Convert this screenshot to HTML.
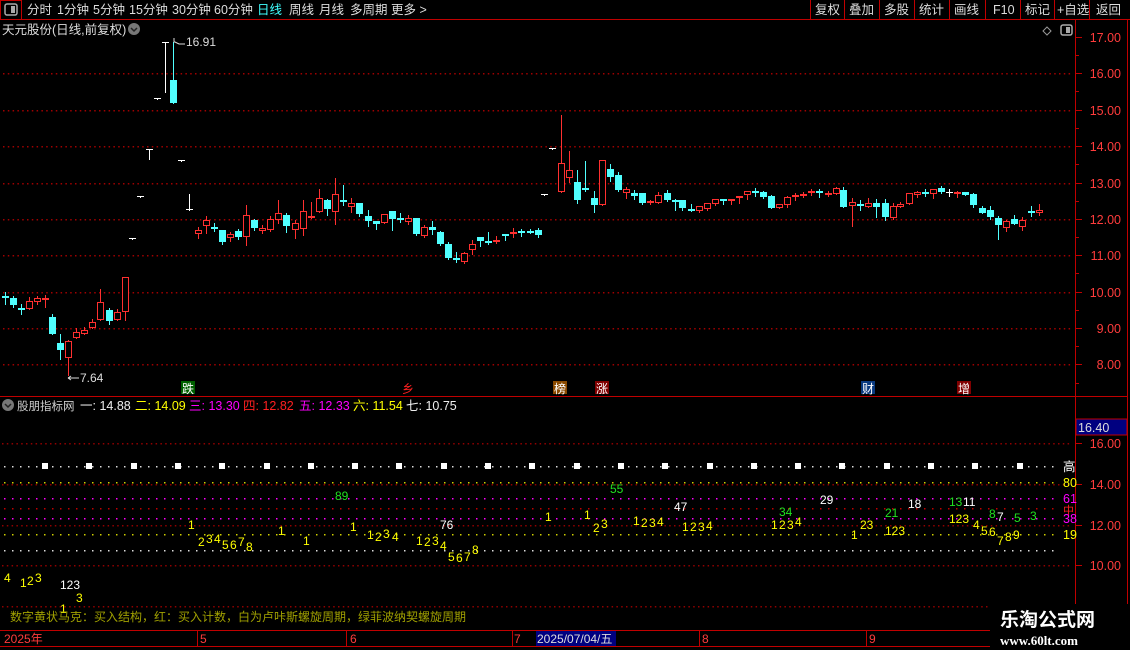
<!DOCTYPE html>
<html><head><meta charset="utf-8"><style>
*{margin:0;padding:0;box-sizing:border-box}
body{width:1130px;height:650px;background:#000;overflow:hidden;position:relative;font-family:"Liberation Sans","Noto Sans CJK SC",sans-serif;color:#ddd}
svg{position:absolute;left:0;top:0}
</style></head><body>
<svg id="s" width="1130" height="650" xmlns="http://www.w3.org/2000/svg" font-family="Liberation Sans, Noto Sans CJK SC, sans-serif">
<line x1="0" y1="19.5" x2="1130" y2="19.5" stroke="#c00000"/>
<rect x="0.5" y="0.5" width="21" height="19" fill="none" stroke="#c00000"/>
<rect x="5" y="4" width="12" height="11" rx="2" fill="none" stroke="#aaa" stroke-width="1.5"/>
<rect x="11" y="6" width="4" height="7" fill="#aaa"/>
<g font-size="12.5" fill="#ddd">
<text x="27" y="14">分时</text><text x="57" y="14">1分钟</text><text x="93" y="14">5分钟</text><text x="129" y="14">15分钟</text><text x="172" y="14">30分钟</text><text x="214" y="14">60分钟</text>
<text x="257" y="14" fill="#40ffff">日线</text><text x="289" y="14">周线</text><text x="319" y="14">月线</text><text x="350" y="14">多周期</text><text x="391" y="14">更多 &gt;</text>
<text x="815" y="14">复权</text><text x="849" y="14">叠加</text><text x="884" y="14">多股</text><text x="919" y="14">统计</text><text x="954" y="14">画线</text><text x="993" y="14">F10</text><text x="1025" y="14">标记</text><text x="1057" y="14">+自选</text><text x="1096" y="14">返回</text>
</g>
<g stroke="#c00000"><line x1="810.5" y1="0" x2="810.5" y2="19"/><line x1="844.5" y1="0" x2="844.5" y2="19"/><line x1="879.5" y1="0" x2="879.5" y2="19"/><line x1="914.5" y1="0" x2="914.5" y2="19"/><line x1="949.5" y1="0" x2="949.5" y2="19"/><line x1="985.5" y1="0" x2="985.5" y2="19"/><line x1="1020.5" y1="0" x2="1020.5" y2="19"/><line x1="1054.5" y1="0" x2="1054.5" y2="19"/><line x1="1089.5" y1="0" x2="1089.5" y2="19"/></g>
<text x="2" y="34" font-size="12.5" fill="#ddd">天元股份(日线,前复权)</text>
<circle cx="134" cy="29" r="6" fill="#777"/><path d="M131 28l3 3 3-3" stroke="#222" stroke-width="1.5" fill="none"/>
<path d="M1047 27l4 4-4 4-4-4z" fill="none" stroke="#999"/>
<rect x="1061" y="25" width="11" height="10" rx="2" fill="none" stroke="#aaa" stroke-width="1.5"/><rect x="1066" y="27" width="4" height="6" fill="#aaa"/>
<g stroke="#c00000"><line x1="1075.5" y1="20" x2="1075.5" y2="630"/><line x1="1127.5" y1="20" x2="1127.5" y2="630"/>
<line x1="0" y1="396.5" x2="1128" y2="396.5"/><line x1="0" y1="630.5" x2="1130" y2="630.5"/><line x1="0" y1="646.5" x2="1130" y2="646.5"/></g>
<g id="grid"></g>
<g id="c"></g>
<g font-size="12.5" fill="#ff3c3c" id="ax"></g>
<text x="186" y="46" font-size="12" fill="#ddd">16.91</text><path d="M174 38v4h1l4 2h6" stroke="#ddd" fill="none"/>
<text x="80" y="382" font-size="12" fill="#ddd">7.64</text><path d="M68 378h11M68 378l3-2M68 378l3 2" stroke="#ddd" fill="none"/>
<rect x="181" y="381" width="14" height="13" fill="#006000"/><text x="182" y="393" font-size="12" fill="#fff">跌</text>
<text x="402" y="393" font-size="12" fill="#ff2020">乡</text>
<rect x="553" y="381" width="14" height="13" fill="#8a4a00"/><text x="554" y="393" font-size="12" fill="#fff">榜</text>
<rect x="595" y="381" width="14" height="13" fill="#800000"/><text x="596" y="393" font-size="12" fill="#fff">涨</text>
<rect x="861" y="381" width="14" height="13" fill="#0a3a80"/><text x="862" y="393" font-size="12" fill="#fff">财</text>
<rect x="957" y="381" width="14" height="13" fill="#800000"/><text x="958" y="393" font-size="12" fill="#fff">增</text>
<circle cx="8" cy="405" r="6" fill="#777"/><path d="M5 404l3 3 3-3" stroke="#222" stroke-width="1.5" fill="none"/>
<g font-size="12.5"><text x="17" y="410" fill="#ccc" font-size="11.5">股朋指标网</text>
<text x="80" y="410" fill="#eee">一: 14.88</text><text x="135" y="410" fill="#ff0">二: 14.09</text><text x="189" y="410" fill="#f0f">三: 13.30</text><text x="243" y="410" fill="#ff2020">四: 12.82</text><text x="299" y="410" fill="#f0f">五: 12.33</text><text x="353" y="410" fill="#ff0">六: 11.54</text><text x="406" y="410" fill="#eee">七: 10.75</text></g>
<rect x="1076" y="419" width="51" height="16" fill="#000080" stroke="#c00000"/><text x="1078" y="432" font-size="12.5" fill="#ddd">16.40</text>
<g font-size="12.5"><text x="1063" y="471" fill="#fff">高</text><text x="1063" y="487" fill="#ff0">80</text><text x="1063" y="503" fill="#f0f">61</text><text x="1063" y="514" fill="#ff2020" font-size="11">中</text><text x="1063" y="523" fill="#f0f">38</text><text x="1063" y="539" fill="#ff0">19</text></g>
<g id="nums" font-size="12"></g>
<text x="10" y="621" font-size="12" fill="#a0a000">数字黄状马克：买入结构，红：买入计数，白为卢咔斯螺旋周期，绿菲波纳契螺旋周期</text>
<g font-size="12" fill="#ff3c3c"><text x="4" y="643">2025年</text><text x="200" y="643">5</text><text x="350" y="643">6</text><text x="514" y="643">7</text><text x="702" y="643">8</text><text x="869" y="643">9</text></g>
<g stroke="#c00000"><line x1="197.5" y1="630" x2="197.5" y2="646"/><line x1="346.5" y1="630" x2="346.5" y2="646"/><line x1="512.5" y1="630" x2="512.5" y2="646"/><line x1="699.5" y1="630" x2="699.5" y2="646"/><line x1="866.5" y1="630" x2="866.5" y2="646"/></g>
<rect x="536" y="631" width="80" height="15" fill="#000080"/><text x="537" y="643" font-size="12" fill="#ddd">2025/07/04/五</text>
<rect x="990" y="604" width="140" height="46" fill="#000"/>
<text x="1000" y="626" font-size="19" font-weight="bold" fill="#fff">乐淘公式网</text>
<text x="1000" y="645" font-size="13" font-weight="bold" fill="#fff" font-family="Liberation Serif, serif">www.60lt.com</text>
</svg>
<script>
var NS="http://www.w3.org/2000/svg";
function el(p,t,a){var e=document.createElementNS(NS,t);for(var k in a)e.setAttribute(k,a[k]);p.appendChild(e);return e;}
var g=document.getElementById('grid');
function dots(y,c,x0,x1,st){for(var x=x0;x<x1;x+=st)el(g,'rect',{x:x,y:y,width:1.5,height:1.5,fill:c});}
[73,110,146,183,219,255,292,328,364].forEach(function(y){dots(y,'#a00000',3,1072,4.8);});
dots(482,'#d0d000',4,1060,8);dots(484,'#900000',2,1072,4.8);dots(498,'#ff00ff',4,1060,8);dots(508,'#c00000',4,1060,8);dots(518,'#ff00ff',4,1060,8);dots(525,'#900000',2,1072,4.8);dots(534,'#d0d000',4,1060,8);dots(550,'#ddd',4,1060,8);dots(565,'#900000',2,1072,4.8);dots(606,'#900000',2,1072,4.8);dots(443,'#900000',2,1072,4.8);
dots(466,'#ddd',4,1060,8);
for(var i=0;i<23;i++){var x=Math.round(45+i*44.3);el(g,'rect',{x:x-3,y:463,width:6,height:6,fill:'#fff'});}
var ax=document.getElementById('ax');
[[37,'17.00'],[73,'16.00'],[110,'15.00'],[146,'14.00'],[183,'13.00'],[219,'12.00'],[255,'11.00'],[292,'10.00'],[328,'9.00'],[364,'8.00'],[443,'16.00'],[484,'14.00'],[525,'12.00'],[565,'10.00']].forEach(function(a){
 var t=el(ax,'text',{x:1121,y:a[0]+5,'text-anchor':'end'});t.textContent=a[1];
 el(ax,'line',{x1:1076,y1:a[0]+.5,x2:1082,y2:a[0]+.5,stroke:'#c00000'});});
for(var y=55;y<395;y+=36.4)el(ax,'line',{x1:1076,y1:Math.round(y)+.5,x2:1079,y2:Math.round(y)+.5,stroke:'#c00000'});
var C='#50ffff',R='#ff3030',W='#fff';
var d=[[5,296,297,292,304,C],[13,298,305,296,307,C],[21,308,309,304,314,C],[29,301,309,297,309,R],[37,298,302,296,304,R],[45,298,299,295,307,R],[52,317,334,314,334,C],[60,343,350,334,359,C],[68,341,358,340,375,R],[76,332,338,328,338,R],[84,330,334,327,334,R],[92,322,328,319,328,R],[100,302,320,289,320,R],[109,310,321,308,324,C],[117,312,320,309,320,R],[125,277,312,277,320,R],
[132,238,239,238,239,W],[140,196,197,196,197,W],[149,149,150,149,159,W],[157,98,99,98,99,W],[165,42,43,42,92,W],[173,80,103,42,103,C],[181,160,161,160,161,W],[189,209,210,194,210,W],
[198,230,234,227,238,R],[206,220,226,216,233,R],[214,227,228,223,231,C],[222,230,242,230,244,C],[230,234,238,232,241,R],[238,231,237,229,239,C],[246,215,237,205,245,R],[254,220,228,219,230,C],[262,228,231,225,233,R],[270,219,230,216,231,R],[278,213,220,200,223,R],
[286,215,226,213,232,C],[295,223,230,220,238,R],[303,211,229,200,235,R],[311,216,217,202,218,R],[319,198,212,189,212,R],[327,200,209,199,215,C],[335,194,212,178,224,R],[343,200,201,185,205,C],[351,203,207,198,212,R],[359,203,214,203,216,C],[368,216,221,210,226,C],[376,221,224,221,229,C],[384,214,223,214,223,R],[392,211,219,211,230,C],[400,218,219,213,222,C],[408,218,222,215,224,R],[416,218,234,218,235,C],[424,227,236,225,237,R],[432,227,230,221,234,C],[440,232,244,231,245,C],[448,244,258,242,259,C],[456,258,259,252,262,C],[464,253,262,252,263,R],[472,244,250,240,254,R],[480,237,241,237,246,C],[488,241,242,232,244,C],[496,240,242,236,243,R],[505,234,235,234,240,C],[513,232,233,228,237,R],[521,231,232,229,236,C],[530,231,232,229,233,C],[538,230,235,228,237,C],
[544,194,195,194,195,W],[552,148,149,148,149,W],[561,163,192,115,192,R],[569,170,178,151,182,R],[577,182,200,170,203,C],[585,188,189,161,191,C],[594,198,205,191,212,C],[602,160,205,160,205,R],[610,169,177,164,181,C],[618,175,190,172,191,C],[626,189,193,187,198,R],[634,193,196,190,199,C],[642,193,203,193,204,C],[650,201,203,200,204,R],[658,195,203,192,203,R],[667,193,200,190,201,C],[675,200,201,199,210,C],[682,200,208,200,210,C],[691,209,211,204,211,C],[699,206,211,206,212,R],[707,203,209,203,210,R],[715,199,204,199,205,R],[723,199,200,199,204,C],[731,199,200,199,204,R],[739,196,198,196,203,R],[747,191,195,191,199,R],[755,191,192,188,196,C],[763,192,197,191,198,C],[771,196,208,195,208,C],[779,204,208,204,208,R],[787,197,205,196,207,R],[795,195,197,193,200,R],[803,194,196,192,197,R],[811,191,193,189,195,R],[819,191,193,189,197,C],[828,193,194,191,196,R],[836,188,194,187,194,R],[843,190,207,187,207,C],[852,202,206,198,226,R],[860,204,205,200,210,C],[868,203,207,198,207,R],[876,203,207,199,217,C],[885,203,217,199,220,C],[893,206,218,203,219,R],[900,204,207,202,207,R],[909,193,204,193,204,R],[917,192,195,191,197,R],[925,192,193,189,196,C],[933,189,194,189,198,R],[941,188,192,186,193,C],[949,192,193,189,196,W],[957,192,194,191,197,R],[965,192,195,192,195,C],[973,194,205,193,207,C],[982,208,213,206,213,C],[990,210,217,206,219,C],[998,218,225,216,239,C],[1006,221,228,220,231,R],[1014,219,224,215,224,C],[1022,220,227,217,230,R],[1031,211,212,206,216,C],[1039,210,213,204,215,R]];
var cg=document.getElementById('c');
d.forEach(function(a){var x=a[0],t=a[1],b=a[2],h=a[3],l=a[4],c=a[5];
 el(cg,'line',{x1:x+.5,y1:h,x2:x+.5,y2:l+1,stroke:c});
 if(c==W){el(cg,'rect',{x:x-3,y:t,width:7,height:Math.max(1,b-t),fill:W});return;}
 if(b-t<=1){el(cg,'rect',{x:x-3,y:t,width:7,height:2,fill:c});return;}
 if(c==C)el(cg,'rect',{x:x-3,y:t,width:7,height:b-t,fill:c});
 else el(cg,'rect',{x:x-2.5,y:t+.5,width:6,height:b-t-1,fill:'#000',stroke:c});});
var ng=document.getElementById('nums');
var Y='#ff0',G='#20e020',Wt='#fff';
var n=[[4,582,'4',Y],[20,587,'1',Y],[27,585,'2',Y],[35,582,'3',Y],[60,589,'123',Wt],[76,602,'3',Y],[60,613,'1',Y],[188,529,'1',Y],[198,546,'2',Y],[206,543,'3',Y],[214,543,'4',Y],[222,549,'5',Y],[230,549,'6',Y],[238,546,'7',Y],[246,551,'8',Y],[278,535,'1',Y],[303,545,'1',Y],[350,531,'1',Y],[367,539,'1',Y],[375,541,'2',Y],[383,538,'3',Y],[392,541,'4',Y],[416,545,'1',Y],[424,546,'2',Y],[432,545,'3',Y],[440,550,'4',Y],[448,561,'5',Y],[456,562,'6',Y],[464,561,'7',Y],[472,554,'8',Y],[440,529,'76',Wt],[335,500,'89',G],[545,521,'1',Y],[584,519,'1',Y],[593,532,'2',Y],[601,528,'3',Y],[633,525,'1',Y],[641,527,'2',Y],[649,527,'3',Y],[657,526,'4',Y],[610,493,'55',G],[674,511,'47',Wt],[682,531,'1',Y],[690,531,'2',Y],[698,531,'3',Y],[706,530,'4',Y],[771,529,'1',Y],[779,529,'2',Y],[787,529,'3',Y],[795,526,'4',Y],[779,516,'34',G],[820,504,'29',Wt],[851,539,'1',Y],[860,529,'23',Y],[885,517,'21',G],[885,535,'123',Y],[908,508,'18',Wt],[963,506,'11',Wt],[949,506,'13',G],[949,523,'123',Y],[973,529,'4',Y],[981,535,'5',Y],[989,536,'6',Y],[997,545,'7',Y],[1005,541,'8',Y],[1013,539,'9',Y],[989,518,'8',G],[997,521,'7',Wt],[1014,522,'5',G],[1030,520,'3',G]];
n.forEach(function(a){var t=el(ng,'text',{x:a[0],y:a[1],fill:a[3]});t.textContent=a[2];});
</script>
</body></html>
